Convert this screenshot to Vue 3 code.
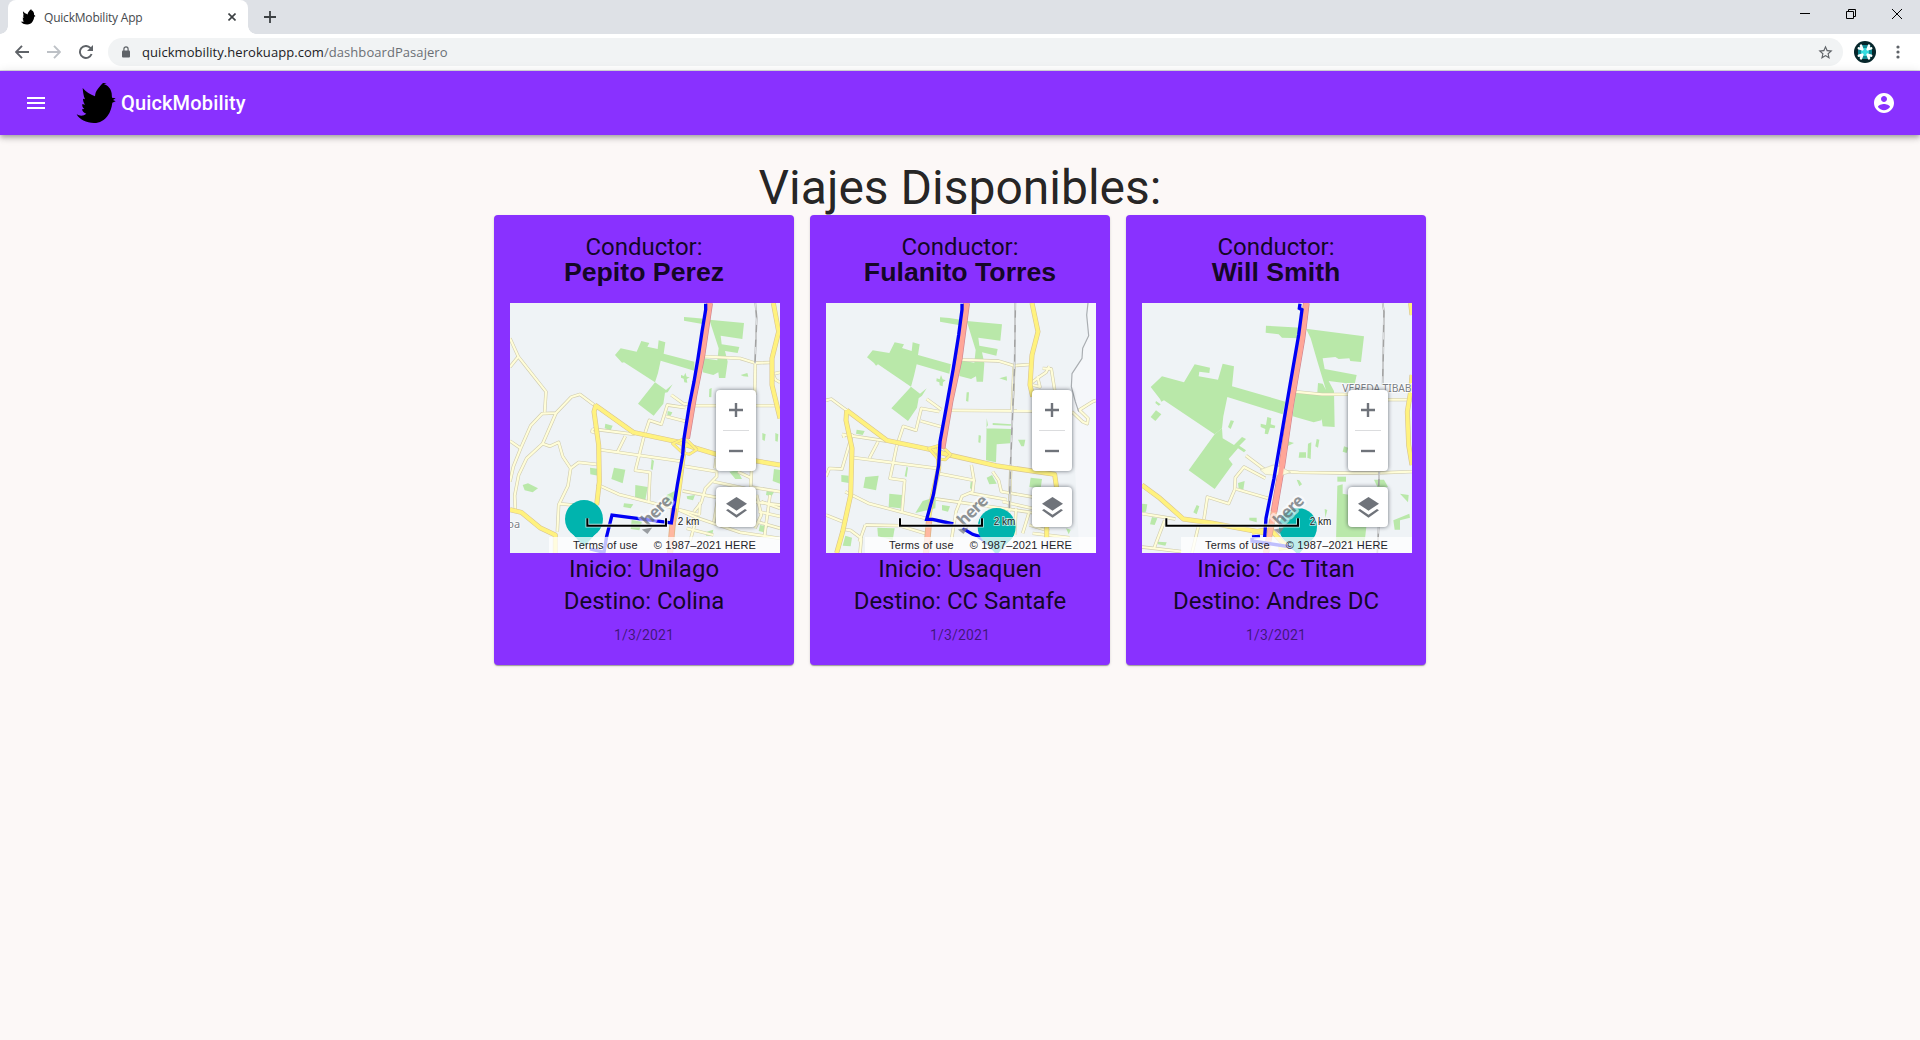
<script setup>
const birdPath =
  'M14 103 C24 109 35 108 43 101 C36 99 31 94 30 88 L37 87 C31 82 30 77 31 72 L39 74 C34 67 33 61 33 56 L39 58 C34 47 33 34 32 24 C42 37 55 43 69 49 C70 39 72 33 79 25 C84 18 89 12 93 9 L104 10 L96 13 C109 17 117 27 119 40 L120 53 L131 55 L123 60 L131 64 L121 68 C119 83 115 96 107 107 C98 120 83 129 66 129 C43 129 22 119 14 103 Z'

const trips = [
  {
    driver: 'Pepito Perez',
    start: 'Unilago',
    end: 'Colina',
    date: '1/3/2021',
    map: {
      shade: '',
      greens: [
        '552,66 580,68 612,71 612,88 590,84 552,77',
        '628,74 732,84 727,132 662,122 665,148 718,156 713,174 675,168 683,200 676,249 657,249 655,232 640,240 608,232 610,190 652,196 656,160',
        '345,180 362,160 410,170 424,138 448,144 442,155 473,162 476,136 496,142 491,176 583,200 583,227 482,197 474,234 465,262 372,202 366,203',
        '465,262 498,285 518,268 503,292 495,293 490,326 461,362 414,326',
        '543,240 552,243 556,233 560,245 569,247 560,252 562,263 553,262 551,251 543,248',
        '628,282 635,279 634,307 627,306', '722,240 742,234 745,245 730,244',
        '503,348 517,352 512,362 502,360', '316,386 338,392 332,406 314,400',
        '342,518 376,524 368,565 334,552', '406,570 443,576 436,616 405,610',
        '270,518 298,522 294,542 271,538', '68,570 84,565 114,580 98,592 74,586',
        '455,492 462,498 458,526 452,522', '787,414 797,418 794,438 787,434',
        '826,414 835,418 833,440 826,438', '822,522 840,525 840,566 818,558',
        '688,530 712,526 726,552 706,552', '500,600 524,588 526,616 496,625',
        '560,604 585,600 579,616 562,612', '372,625 400,628 392,640 370,636',
        '395,675 426,680 418,706 392,702', '780,690 805,694 792,712 776,708',
        '620,710 640,704 636,722 618,722', '800,588 822,592 814,604 798,600',
      ],
      minor: [
        'M30 130 L55 185 L138 290 L134 352', 'M30 216 L55 185',
        'M285 332 L240 298 L214 306 L168 354 L126 356 L92 392 L62 460 L40 515 L30 560',
        'M168 354 L128 446 L80 490 L56 540 L44 602 L46 642', 'M128 446 L150 454 L176 442 L188 484 L212 520 L204 572 L176 630 L172 710',
        'M30 438 L62 460', 'M212 520 L236 502 L290 508', 'M278 402 L404 418', 'M278 402 L276 410 L296 416',
        'M376 424 L352 472', 'M298 464 L550 500', 'M432 424 L406 526 L450 532 L446 620',
        'M432 424 L448 376 L484 388 L502 330 L556 338', 'M514 300 L550 326 L572 330', 'M498 364 L560 380',
        'M606 184 L720 190 L765 204 L820 202', 'M766 204 L764 300', 'M580 332 L830 332',
        'M290 568 L356 598 L530 642 L600 660', 'M176 626 L280 636', 'M555 514 L650 530 L650 545 L616 580 L604 622 L582 650',
        'M548 588 L654 608 L840 630', 'M648 490 L645 520', 'M714 530 L752 548 L752 576 L840 590', 'M756 502 L752 575',
        'M824 236 L840 232 M820 240 L826 254 L840 262', 'M640 560 L764 586', 'M770 600 L784 660 L765 700',
        'M530 642 L590 668 L720 712 L840 730', 'M600 622 L598 660 M654 608 L642 680', 'M784 620 L840 640 M776 650 L840 664 M770 680 L840 700',
        'M810 600 L794 720', 'M560 700 L640 720 M590 666 L570 740',
      ],
      major: [
        'M820 24 L836 110 L816 190 L816 270 L840 370', 'M285 330 L400 412 L530 440 L590 460 L650 478 L840 510',
        'M290 630 L298 560 L296 450 L282 350 L288 330', 'M30 644 L64 652 L120 698 L166 720 L166 774',
        'M550 440 L550 480 L540 560 L526 660 L516 700',
      ],
      ramps: 'M518 446 L546 472 L568 478 L590 464 L556 430 Z',
      highway: 'M629 24 L606 180 L582 300 L560 430',
      highwayLower: 'M522 640 L510 774',
      rail: 'M766 24 L770 70 L765 205',
      border: '',
      route: 'M617 26 L617 44 L606 110 L594 190 L582 260 L568 330 L552 430 L548 480 L532 570 L514 684 L336 660 L320 724',
      routeTail: 'M320 724 L312 772 L270 762',
      pin: [252, 672],
      scale: 260,
      place: { text: 'oa', x: 22, y: 698, size: 33 },
    },
  },
  {
    driver: 'Fulanito Torres',
    start: 'Usaquen',
    end: 'CC Santafe',
    date: '1/3/2021',
    map: {
      shade: '816,24 840,24 840,774 790,774 770,380 768,236 790,200 816,122',
      greens: [
        '372,67 400,69 434,74 432,91 410,87 372,80',
        '452,78 558,88 553,137 487,128 490,152 545,162 541,182 498,172 505,205 501,260 482,260 480,244 465,252 430,243 434,196 475,203 479,165',
        '153,187 170,166 220,174 236,142 264,148 258,159 287,168 290,142 311,148 306,180 405,208 400,236 302,208 294,242 285,275 186,208 180,212 174,204',
        '285,275 312,296 332,280 318,302 308,310 303,338 276,378 226,340',
        '362,250 371,253 375,240 380,253 389,256 381,262 380,274 371,271 370,262 361,259',
        '452,292 459,292 457,320 450,318', '550,250 572,244 573,257',
        '122,404 146,408 140,420 120,416', '148,546 188,542 180,586 142,578', '220,596 258,600 254,640 218,636',
        '76,540 98,542 98,564 76,560', '512,370 516,390 510,400 586,402 582,445 542,448 540,502 510,496',
        '530,384 586,388 584,392 530,390', '488,420 495,422 493,444 487,442', '606,434 628,434 624,454 616,454',
        '512,548 528,540 542,566 520,568', '464,560 474,564 470,584 462,580', '272,514 276,518 272,546 266,544',
        '320,618 360,606 358,640 298,654', '88,722 108,728 104,754 80,752', '184,698 236,700 230,735 186,724',
        '644,548 678,552 674,580 640,576', '750,700 764,704 758,718', '378,630 402,634 396,650 378,646',
      ],
      minor: [
        'M30 316 L46 312 L92 346', 'M78 418 L210 438', 'M92 416 L108 420 L78 522 L40 520 L30 545', 'M82 420 L84 428',
        'M186 440 L160 490', 'M112 488 L364 520', 'M242 454 L222 550 L266 556 L258 652', 'M242 454 L262 394 L300 406 L316 340 L370 350',
        'M332 312 L376 344', 'M314 378 L378 396', 'M426 194 L548 198 L594 212 L648 208', 'M404 346 L648 348',
        'M594 212 L588 348', 'M88 590 L160 626 L320 668 L400 684', 'M30 660 L80 680', 'M78 702 L104 706 L136 730 L132 774',
        'M148 690 L250 692 L330 716', 'M148 690 L130 740', 'M366 535 L474 556 L466 510', 'M474 556 L470 590 L438 604 L420 650 L400 774',
        'M360 612 L560 640 L700 660', 'M530 530 L548 556 L556 590 L650 606', 'M584 526 L580 650', 'M460 594 L572 614',
        'M648 262 L672 244 L690 232 L700 214 M664 244 L672 276 L650 270', 'M680 220 L706 222 L716 285',
        'M768 350 L800 380 L814 386 L816 370 L790 345 L830 320 L840 316', 'M600 640 L596 720 M640 650 L620 715',
        'M560 620 L720 656', 'M640 690 L700 708 M650 715 L760 728',
      ],
      major: [
        'M648 24 L666 110 L648 180 L642 270 L650 305', 'M92 346 L212 436 L345 464 L400 480 L540 512 L716 538 L722 580',
        'M92 346 L90 376 L108 460 L104 600 L80 710 L62 774', 'M692 695 L692 728', 'M368 450 L368 520 L350 600 L338 668',
      ],
      ramps: 'M338 460 L366 492 L388 494 L404 478 L374 450 Z',
      highway: 'M452 24 L430 190 L402 320 L378 460',
      highwayLower: 'M340 670 L330 774',
      rail: 'M598 24 L596 200 L588 400 L584 500 L580 640',
      border: 'M816 24 L812 60 L818 122 L800 160 L798 190 L768 236 L766 275 L778 320 L788 350',
      route: 'M438 26 L438 44 L428 120 L412 220 L394 320 L372 440 L368 510 L352 600 L332 673 L350 673 L412 687 M440 700 L470 718 L490 724',
      routeTail: 'M486 724 L530 756 L544 770',
      pin: [542, 696],
      scale: 250,
      place: null,
    },
  },
  {
    driver: 'Will Smith',
    start: 'Cc Titan',
    end: 'Andres DC',
    date: '1/3/2021',
    map: {
      shade: '',
      greens: [
        '402,92 508,98 505,130 450,128 440,118 401,113',
        '522,101 696,124 687,201 655,198 652,190 620,192 610,186 572,190 578,222 674,240 668,268 590,258 606,288 608,396 572,394 566,350 578,310 568,376 545,382 482,364 490,290 556,292 558,264 572,266 582,285 554,192 536,130',
        '56,276 90,244 156,262 188,208 234,218 232,234 202,230 200,244 258,254 272,206 306,214 300,274 460,320 452,358 286,306 274,364 270,400 248,418 96,316 88,320 84,312',
        '248,418 270,400 272,430 306,450 330,426 342,432 322,452 342,466 336,472 318,460 290,492 302,508 248,582 170,526',
        '386,386 402,390 406,366 418,370 416,388 430,392 428,400 414,398 408,418 398,416 400,402 386,396',
        '72,346 88,358 70,378 56,366', '72,318 86,328 80,332 70,324', '296,376 306,378 296,402 288,396',
        '502,472 522,472 522,488 500,488', '528,446 538,442 536,492 526,488', '554,432 562,434 558,458 550,454',
        '466,438 486,444 466,454', '494,554 502,556 510,568 502,574', '318,564 338,558 334,584 320,580',
        '194,630 202,634 194,658 184,652', '60,666 76,670 68,690 54,688', '352,668 374,668 374,682 352,676', '30,626 46,628 42,650 30,652',
        '616,572 632,568 632,596 668,602 664,625 712,614 698,740 612,740', '616,545 642,545 642,560 616,560',
        '726,554 756,554 768,576 738,580', '804,596 830,600 828,622', '784,676 832,656 834,668 804,676 804,704 788,704',
        '636,454 648,458 644,474 632,470', '78,740 104,742 100,752 78,748', '578,642 586,645 580,668',
      ],
      minor: [
        'M488 290 L570 298 L650 298', 'M768 314 L840 314', 'M342 482 L398 524', 'M400 550 L336 516 L310 548 L308 584 L290 626 L226 606 L216 672',
        'M312 582 L408 610', 'M464 530 L500 532 L630 534 L730 534 L840 530', 'M30 656 L130 672', 'M98 676 L66 760',
        'M30 756 L150 770', 'M200 690 L180 774',
      ],
      major: [
        'M30 570 L84 610 L154 672 L238 684 L400 714', 'M836 24 L840 60 M840 240 L836 290 L826 350 L830 450 L840 510',
        'M360 712 L392 706 L420 708 L464 756 L440 760',
      ],
      ramps: '',
      interchange: 'M384 524 L424 510 L452 518 L476 532 L448 542 L400 538 Z',
      highway: 'M523 24 L510 130 L476 330 L450 510 L426 650',
      highwayLower: 'M426 650 L402 774',
      rail: 'M752 24 L756 50 L752 270 M742 530 L740 574 M740 694 L736 774',
      border: '',
      route: 'M504 26 L502 40 L510 44 L500 120 L474 270 L450 410 L426 550 L402 670 L398 726 M360 726 L384 724',
      routeTail: 'M360 728 L360 738 L480 756 L498 770',
      pin: [498, 696],
      scale: 101,
      place: { text: 'VEREDA TIBABI', x: 631, y: 290, size: 31 },
    },
  },
]
</script>

<template>
  <div class="screen">
    <div class="tabstrip">
      <div class="tab">
        <svg class="favicon" viewBox="12 6 120 126"><path :d="birdPath" /></svg>
        <span class="tab-title">QuickMobility App</span>
        <svg class="tab-close" viewBox="0 0 8 8"><path d="M.5 .5 L7.5 7.5 M7.5 .5 L.5 7.5" /></svg>
      </div>
      <svg class="tab-new" viewBox="0 0 12 12"><path d="M6 0 V12 M0 6 H12" /></svg>
      <div class="win-controls">
        <svg viewBox="0 0 10 10"><path d="M0 4.5 H10" /></svg>
        <svg viewBox="0 0 10 10"><path d="M.5 2.5 H7.5 V9.5 H.5 Z M2.5 2.5 V.5 H9.5 V7.5 H7.5" /></svg>
        <svg viewBox="0 0 10 10"><path d="M0 0 L10 10 M10 0 L0 10" /></svg>
      </div>
    </div>

    <div class="toolbar">
      <svg class="nav" viewBox="0 0 14 14"><path d="M14 7 H1.5 M7 .8 L1 7 L7 13.2" /></svg>
      <svg class="nav off" viewBox="0 0 14 14"><path d="M0 7 H12.5 M7 .8 L13 7 L7 13.2" /></svg>
      <svg class="nav" viewBox="0 0 14 14">
        <path d="M12.6 9 A6 6 0 1 1 11.4 2.9 L12.4 4" /><path class="solid" d="M14 0 V6 H8 Z" />
      </svg>
      <div class="omnibox">
        <svg class="lock" viewBox="0 0 8 12">
          <path d="M1.9 5 V3 A2.1 2.1 0 0 1 6.1 3 V5" fill="none" stroke="#5f6368" stroke-width="1.2" />
          <rect y="4.4" width="8" height="7" rx="1" fill="#5f6368" />
        </svg>
        <span class="url">quickmobility.herokuapp.com<span class="path">/dashboardPasajero</span></span>
        <svg class="star" viewBox="0 0 24 24">
          <path d="M22 9.24l-7.19-.62L12 2 9.19 8.63 2 9.24l5.46 4.73L5.82 21 12 17.27 18.18 21l-1.63-7.03L22 9.24zM12 15.4l-3.76 2.27 1-4.28-3.32-2.88 4.38-.38L12 6.1l1.71 4.04 4.38.38-3.32 2.88 1 4.28L12 15.4z" />
        </svg>
      </div>
      <svg class="ext" viewBox="0 0 22 22">
        <circle cx="11" cy="11" r="11" fill="#06262b" />
        <path d="M7 4 H15 L18 7 V15 L15 18 H7 L4 15 V7 Z" fill="#128b94" />
        <circle cx="11" cy="11" r="4" fill="#36dde0" />
        <g fill="none" stroke="#fff" stroke-width="2.5" stroke-linecap="round" stroke-linejoin="round">
          <path d="M7 4.6 L8.4 8.4 L4.8 7.4 M15 4.6 L13.6 8.4 L17.2 7.4 M7 17.4 L8.4 13.6 L4.8 14.6 M15 17.4 L13.6 13.6 L17.2 14.6" />
        </g>
      </svg>
      <svg class="dots" viewBox="0 0 4 14">
        <circle cx="2" cy="2" r="1.6" /><circle cx="2" cy="7" r="1.6" /><circle cx="2" cy="12" r="1.6" />
      </svg>
    </div>

    <header class="appbar">
      <svg class="menu" viewBox="0 0 24 24"><path d="M3 18h18v-2H3v2zm0-5h18v-2H3v2zm0-7v2h18V6H3z" /></svg>
      <svg class="bird" viewBox="0 0 144 144"><path :d="birdPath" /></svg>
      <span class="brand">QuickMobility</span>
      <svg class="account" viewBox="0 0 24 24">
        <path d="M12 2C6.48 2 2 6.48 2 12s4.48 10 10 10 10-4.48 10-10S17.52 2 12 2zm0 3c1.66 0 3 1.34 3 3s-1.34 3-3 3-3-1.34-3-3 1.34-3 3-3zm0 14.2c-2.5 0-4.71-1.28-6-3.22.03-1.99 4-3.08 6-3.08 1.99 0 5.97 1.09 6 3.08-1.29 1.94-3.5 3.22-6 3.22z" />
      </svg>
    </header>

    <main>
      <h1>Viajes Disponibles:</h1>
      <div class="cards">
        <article v-for="trip in trips" :key="trip.driver" class="card">
          <div class="label">Conductor:</div>
          <h2>{{ trip.driver }}</h2>
          <div class="map">
            <svg class="canvas" viewBox="30 24 810 750">
              <rect x="30" y="24" width="810" height="750" fill="#eff3f6" />
              <polygon v-if="trip.map.shade" :points="trip.map.shade" fill="#f5f7fa" />
              <polygon v-for="g in trip.map.greens" :key="g" :points="g" fill="#b9e8a9" />
              <g class="road">
                <path v-for="r in trip.map.minor" :key="r" :d="r" stroke="#cfcbaf" stroke-width="10" />
                <path v-for="r in trip.map.minor" :key="r + 'f'" :d="r" stroke="#fffdd8" stroke-width="6.5" />
                <path :d="trip.map.rail" stroke="#a2a2a2" stroke-width="5" />
                <path :d="trip.map.rail" stroke="#e9ecee" stroke-width="2.5" stroke-dasharray="22 22" />
                <path v-if="trip.map.border" :d="trip.map.border" stroke="#a9adb1" stroke-width="3.5" />
                <path v-for="r in trip.map.major" :key="r" :d="r" stroke="#d8c491" stroke-width="15" />
                <path v-for="r in trip.map.major" :key="r + 'f'" :d="r" stroke="#fff27e" stroke-width="11.5" />
                <path v-if="trip.map.ramps" :d="trip.map.ramps" stroke="#d8c491" stroke-width="9" />
                <path v-if="trip.map.ramps" :d="trip.map.ramps" stroke="#fff27e" stroke-width="6.5" />
                <path :d="trip.map.highwayLower" stroke="#dfb287" stroke-width="19" />
                <path :d="trip.map.highwayLower" stroke="#ffb7a0" stroke-width="14" />
                <path :d="trip.map.highway" stroke="#cf8490" stroke-width="20" />
                <path :d="trip.map.highway" stroke="#ffa698" stroke-width="16" />
              </g>
              <path v-if="trip.map.interchange" :d="trip.map.interchange" fill="#fffdd8" stroke="#cfcbaf" stroke-width="2" opacity=".85" />
              <path v-if="trip.map.interchange" :d="trip.map.highway" fill="none" stroke="#ffa698" stroke-width="14" />
              <text v-if="trip.map.place" class="place" :x="trip.map.place.x" :y="trip.map.place.y" :font-size="trip.map.place.size">{{ trip.map.place.text }}</text>
              <path class="route" :d="trip.map.route" />
              <path class="route" :d="trip.map.routeTail" />
              <g :transform="`translate(${trip.map.pin[0]} ${trip.map.pin[1]})`" fill="#00b4ae">
                <circle r="57" /><path d="M-52 24 L0 84 L52 24 Z" />
              </g>
              <g transform="translate(434 706) rotate(-45)">
                <text class="here" x="14" y="0">here</text>
                <path d="M-4 -8 L22 10 L-2 14 Z" fill="#7b7f83" opacity=".75" />
              </g>
              <path :d="`M${trip.map.scale + 2} 670 V692 H498 V670`" fill="none" stroke="#fff" stroke-opacity=".7" stroke-width="11" />
              <path :d="`M${trip.map.scale + 2} 670 V692.5 H498 V670`" fill="none" stroke="#000" stroke-width="6" />
              <text class="km" x="533" y="690">2 km</text>
            </svg>
            <div class="zoom">
              <svg viewBox="0 0 14 14"><path d="M7 0 V14 M0 7 H14" /></svg>
              <hr />
              <svg viewBox="0 0 14 14"><path d="M0 7 H14" /></svg>
            </div>
            <div class="layers">
              <svg viewBox="0 0 63 63">
                <path d="M31.500 0 L63 20 L31.500 41 L0 20 Z" /><path d="M6 36 L31.500 53 L57 36 L63 40 L31.500 62 L0 40 Z" />
              </svg>
            </div>
            <div class="copyright"><span>Terms of use</span><span>© 1987–2021 HERE</span></div>
          </div>
          <div class="line">Inicio: {{ trip.start }}</div>
          <div class="line">Destino: {{ trip.end }}</div>
          <div class="date">{{ trip.date }}</div>
        </article>
      </div>
    </main>
  </div>
</template>

<style>
body {
  background: #fcf8f7;
}
</style>

<style scoped>
.screen {
  height: 1040px;
  overflow: hidden;
  background: #fcf8f7;
  font-family: Roboto, sans-serif;
  color: rgba(0, 0, 0, 0.87);
}
svg {
  display: block;
  flex: none;
}
.tabstrip {
  display: flex;
  align-items: center;
  height: 34px;
  background: #dee1e6;
}
.tab {
  position: relative;
  box-sizing: border-box;
  display: flex;
  align-items: center;
  width: 240px;
  height: 34px;
  margin-left: 8px;
  padding: 0 12px;
  background: #fff;
  border-radius: 8px 8px 0 0;
}
.tab::before,
.tab::after {
  content: '';
  position: absolute;
  bottom: 0;
  width: 8px;
  height: 8px;
}
.tab::before {
  left: -8px;
  background: radial-gradient(circle at 0 0, transparent 7.5px, #fff 8px);
}
.tab::after {
  right: -8px;
  background: radial-gradient(circle at 100% 0, transparent 7.5px, #fff 8px);
}
.favicon {
  width: 16px;
  height: 16px;
}
.tab-title {
  flex: 1;
  margin-left: 8px;
  font: 12px 'Open Sans', sans-serif;
  letter-spacing: -0.2px;
  color: #45494d;
  white-space: nowrap;
}
.tab-close {
  width: 8px;
  height: 8px;
  stroke: #3c4043;
  stroke-width: 1.6;
}
.tab-new {
  width: 12px;
  height: 12px;
  margin-left: 16px;
  stroke: #3c4043;
  stroke-width: 1.8;
}
.win-controls {
  display: flex;
  gap: 36px;
  margin: 0 18px 6px auto;
}
.win-controls svg {
  width: 10px;
  height: 10px;
  fill: none;
  stroke: #000;
}
.toolbar {
  box-sizing: border-box;
  display: flex;
  align-items: center;
  height: 37px;
  padding: 0 20px 0 15px;
  background: #fff;
  border-bottom: 1px solid #dadce0;
}
.nav {
  width: 14px;
  height: 14px;
  margin-right: 18px;
  fill: none;
  stroke: #5f6368;
  stroke-width: 1.9;
}
.nav.off {
  stroke: #bdc1c6;
}
.nav .solid {
  fill: #5f6368;
  stroke: none;
}
.omnibox {
  display: flex;
  align-items: center;
  flex: 1;
  height: 28px;
  margin-left: -3px;
  padding: 0 9px 0 14px;
  border-radius: 14px;
  background: #f1f3f4;
}
.lock {
  width: 8px;
  height: 12px;
}
.url {
  flex: 1;
  margin-left: 12px;
  font: 13px 'Open Sans', sans-serif;
  letter-spacing: 0.06px;
  color: #202124;
}
.path {
  color: #6b6f74;
}
.star {
  width: 17px;
  height: 17px;
  fill: #5f6368;
}
.ext {
  width: 22px;
  height: 22px;
  margin-left: 11px;
}
.dots {
  width: 4px;
  height: 14px;
  margin-left: 20px;
  fill: #5f6368;
}
.appbar {
  position: relative;
  box-sizing: border-box;
  display: flex;
  align-items: center;
  height: 64px;
  padding: 0 24px;
  background: #8931ff;
  color: #fff;
  box-shadow: 0 2px 4px -1px rgba(0, 0, 0, 0.2), 0 4px 5px 0 rgba(0, 0, 0, 0.14), 0 1px 10px 0 rgba(0, 0, 0, 0.12);
}
.menu,
.account {
  width: 24px;
  height: 24px;
  fill: #fff;
}
.bird {
  width: 48px;
  height: 48px;
  margin: 2px 0 0 24px;
}
.brand {
  flex: 1;
  margin-left: 1px;
  font-size: 20px;
  font-weight: 500;
  letter-spacing: 0.15px;
}
main {
  padding-top: 25px;
}
h1 {
  margin: 0 0 -1px;
  font-size: 48px;
  font-weight: 400;
  line-height: 56px;
  text-align: center;
}
.cards {
  display: flex;
  justify-content: center;
  gap: 16px;
}
.card {
  box-sizing: border-box;
  width: 300px;
  height: 450px;
  padding: 16px 15px;
  border-radius: 4px;
  background: #8931ff;
  text-align: center;
  box-shadow: 0 2px 1px -1px rgba(0, 0, 0, 0.2), 0 1px 1px 0 rgba(0, 0, 0, 0.14), 0 1px 3px 0 rgba(0, 0, 0, 0.12);
}
.label,
.line {
  font-size: 24px;
  line-height: 32px;
}
h2 {
  margin: 0 0 21px;
  font: bold 26.7px/19px 'Liberation Sans', sans-serif;
}
.map {
  position: relative;
  width: 270px;
  height: 250px;
  margin-left: 1px;
  overflow: hidden;
}
.canvas {
  width: 270px;
  height: 250px;
}
.road path {
  fill: none;
  stroke-linejoin: round;
}
.route {
  fill: none;
  stroke: #0000f5;
  stroke-width: 10;
}
.place {
  font-family: 'Noto Sans', sans-serif;
  fill: #7b7f86;
  stroke: #fff;
  stroke-width: 4;
  paint-order: stroke;
  letter-spacing: -0.2px;
}
.here {
  font: bold 50px 'Noto Sans', sans-serif;
  fill: #7d8286;
  stroke: #fff;
  stroke-opacity: 0.65;
  stroke-width: 14;
  stroke-linejoin: round;
  paint-order: stroke;
  letter-spacing: -2px;
  opacity: 0.85;
}
.km {
  font: 30px 'Liberation Sans', sans-serif;
  fill: #222;
  stroke: #fff;
  stroke-opacity: 0.7;
  stroke-width: 5;
  paint-order: stroke;
}
.zoom,
.layers {
  position: absolute;
  right: 24px;
  width: 40px;
  display: flex;
  flex-direction: column;
  align-items: center;
  justify-content: center;
  background: #fff;
  border-radius: 4px;
  box-shadow: 0 0 4px rgba(15, 22, 33, 0.6);
}
.zoom {
  top: 87px;
  height: 81px;
  gap: 13px;
}
.zoom svg {
  width: 14px;
  height: 14px;
  stroke: #6f737a;
  stroke-width: 2.4;
}
.zoom hr {
  width: 26px;
  height: 1px;
  margin: 0;
  border: 0;
  background: #dbdcde;
}
.layers {
  top: 184px;
  height: 40px;
}
.layers svg {
  width: 21px;
  height: 21px;
  fill: #6f737a;
}
.copyright {
  position: absolute;
  right: 0;
  bottom: 0;
  box-sizing: border-box;
  display: flex;
  justify-content: flex-end;
  gap: 16px;
  width: 231px;
  height: 16px;
  padding-right: 24px;
  background: rgba(255, 255, 255, 0.75);
  font: 11px/16px 'Liberation Sans', sans-serif;
  letter-spacing: 0.15px;
  color: #1f2328;
  white-space: nowrap;
}
.date {
  margin-top: 8px;
  font-size: 14px;
  line-height: 20px;
  letter-spacing: 0.15px;
  color: rgba(0, 0, 0, 0.54);
}
</style>
